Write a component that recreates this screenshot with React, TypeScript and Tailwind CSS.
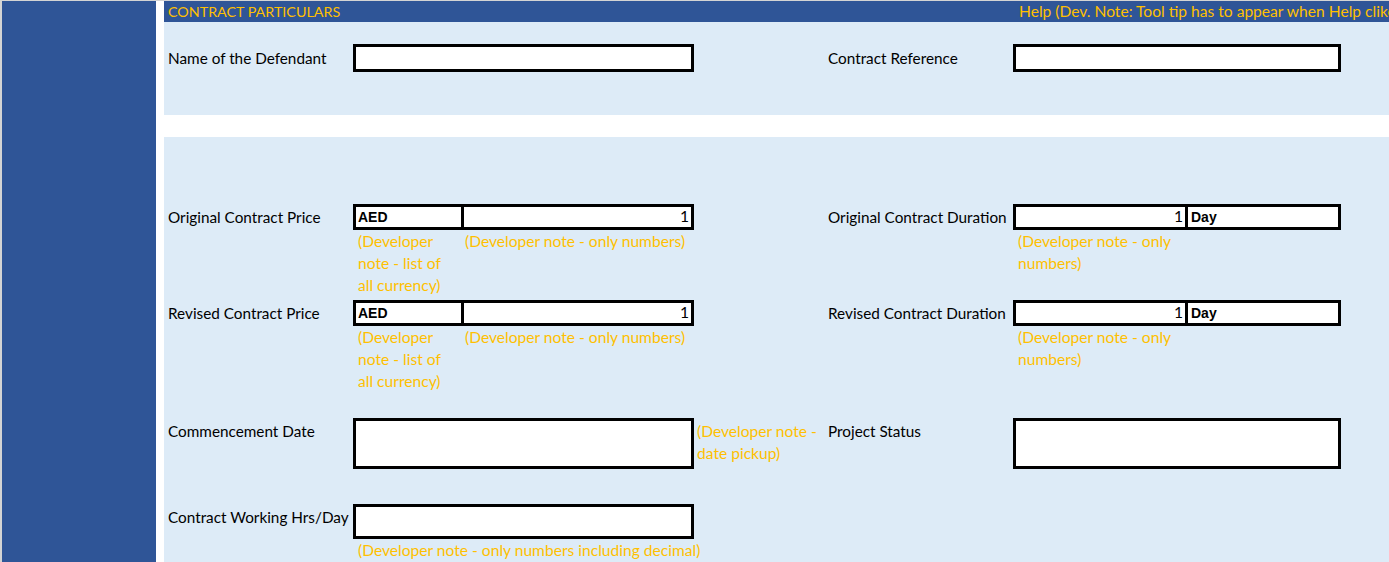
const note = "text-[#FFC000] leading-[22px] whitespace-nowrap";
const box = "border-[3px] border-black bg-white shrink-0";
const bold = "[font-family:'Liberation_Sans',Arial,sans-serif] font-bold text-[14px]";

function Label({ children }: { children: React.ReactNode }) {
  return (
    <div className="w-[189px] shrink-0 pl-1 pt-[1px] h-[26px] flex items-center whitespace-nowrap text-[15.3px]">
      {children}
    </div>
  );
}

function PriceBox() {
  return (
    <div className={`${box} w-[341px] h-[26px] flex`}>
      <div className={`w-[108px] border-r-[3px] border-black pl-[2px] flex items-center ${bold}`}>AED</div>
      <div className="flex-1 flex items-center justify-end pr-[2px]">1</div>
    </div>
  );
}

function DurationBox() {
  return (
    <div className={`${box} w-[328px] h-[26px] flex`}>
      <div className="w-[172px] border-r-[3px] border-black flex items-center justify-end pr-[2px]">1</div>
      <div className={`flex-1 pl-[3px] flex items-center ${bold}`}>Day</div>
    </div>
  );
}

function PriceNotes() {
  return (
    <div className="flex">
      <div className="w-[189px] shrink-0" />
      <div className={`w-[109px] shrink-0 pl-[5px] ${note}`}>
        (Developer
        <br />
        note - list of
        <br />
        all currency)
      </div>
      <div className={`w-[232px] shrink-0 pl-[3px] ${note}`}>(Developer note - only numbers)</div>
      <div className="w-[130px] shrink-0" />
      <div className="w-[189px] shrink-0" />
      <div className={`pl-[5px] ${note}`}>
        (Developer note - only
        <br />
        numbers)
      </div>
    </div>
  );
}

export default function App() {
  return (
    <div className="w-[1389px] h-[562px] overflow-hidden bg-white border-t border-l-2 border-[#d4d4d4] flex [font-family:Lato,'Liberation_Sans',sans-serif] text-[15.6px] text-black">
      <div className="w-[154px] shrink-0 bg-[#2F5597]" />
      <div className="w-[8px] shrink-0" />
      <div className="flex-1 flex flex-col min-w-0">
        <div className="h-[21px] shrink-0 bg-[#2F5597] flex items-center text-[#FFC000] overflow-hidden">
          <div className="w-[855px] shrink-0 pl-1 whitespace-nowrap text-[14.3px]">CONTRACT PARTICULARS</div>
          <div className="whitespace-nowrap">Help (Dev. Note: Tool tip has to appear when Help cliked)</div>
        </div>

        <div className="h-[93px] shrink-0 bg-[#DDEBF7] pt-[22px]">
          <div className="flex items-center h-[28px]">
            <Label>Name of the Defendant</Label>
            <div className={`${box} w-[341px] h-[28px]`} />
            <div className="w-[130px] shrink-0" />
            <Label>Contract Reference</Label>
            <div className={`${box} w-[328px] h-[28px]`} />
          </div>
        </div>

        <div className="h-[22px] shrink-0" />

        <div className="flex-1 bg-[#DDEBF7] pt-[67px]">
          <div className="flex">
            <Label>Original Contract Price</Label>
            <PriceBox />
            <div className="w-[130px] shrink-0" />
            <Label>Original Contract Duration</Label>
            <DurationBox />
          </div>
          <PriceNotes />

          <div className="flex mt-[4px]">
            <Label>Revised Contract Price</Label>
            <PriceBox />
            <div className="w-[130px] shrink-0" />
            <Label>Revised Contract Duration</Label>
            <DurationBox />
          </div>
          <PriceNotes />

          <div className="flex mt-[26px]">
            <Label>Commencement Date</Label>
            <div className={`${box} w-[341px] h-[51px]`} />
            <div className={`w-[130px] shrink-0 pl-[3px] pt-[2px] ${note}`}>
              (Developer note -
              <br />
              date pickup)
            </div>
            <Label>Project Status</Label>
            <div className={`${box} w-[328px] h-[51px]`} />
          </div>

          <div className="flex mt-[35px]">
            <Label>Contract Working Hrs/Day</Label>
            <div className={`${box} w-[341px] h-[35px]`} />
          </div>
          <div className="flex">
            <div className="w-[189px] shrink-0" />
            <div className={`pl-[5px] ${note}`}>(Developer note - only numbers including decimal)</div>
          </div>
        </div>
      </div>
    </div>
  );
}
